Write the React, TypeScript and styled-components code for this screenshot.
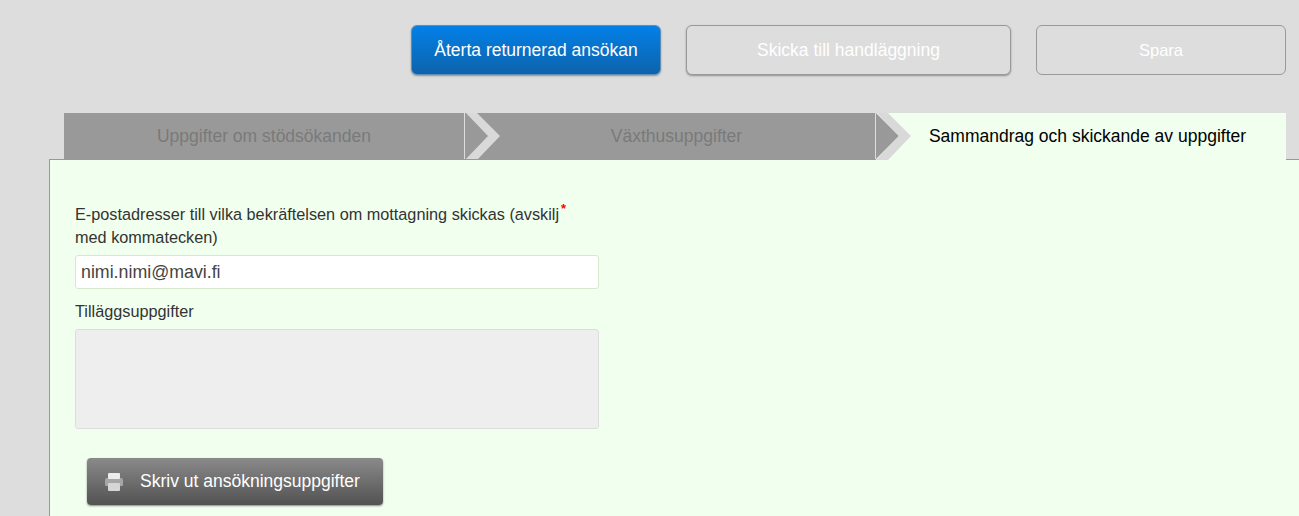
import React from 'react'
import styled, { createGlobalStyle } from 'styled-components'

const GlobalStyle = createGlobalStyle`
  html, body {
    margin: 0;
    padding: 0;
    height: 516px;
    overflow: hidden;
    background: #dddddd;
    font-family: "Liberation Sans", Arial, sans-serif;
  }
  * { box-sizing: border-box; }
`

const Page = styled.div`
  width: 1299px;
  height: 516px;
  overflow: hidden;
`

const Toolbar = styled.div`
  display: flex;
  justify-content: flex-end;
  gap: 25px;
  padding: 25px 13px 0 0;
`

const ActionButton = styled.button<{ $width: number; $flat?: boolean }>`
  width: ${p => p.$width}px;
  height: 50px;
  border: 1px solid #999999;
  border-radius: 6px;
  background: #dddddd;
  color: #ffffff;
  font: ${p => (p.$flat ? 16.5 : 17.5)}px "Liberation Sans", Arial, sans-serif;
  box-shadow: ${p => (p.$flat ? 'none' : '0 1px 2px rgba(0, 0, 0, 0.35)')};
`

const PrimaryButton = styled(ActionButton)`
  border-color: #5f8db5;
  background: linear-gradient(to bottom, #0380e8, #0d63ab);
`

const Steps = styled.div`
  display: flex;
  margin: 38px 13px 0 64px;
  height: 46px;
`

const Step = styled.div<{ $active?: boolean; $arrow?: boolean; $width: number }>`
  position: relative;
  display: flex;
  align-items: center;
  justify-content: center;
  width: ${p => p.$width}px;
  height: ${p => (p.$active ? 47 : 46)}px;
  z-index: ${p => (p.$active ? 1 : 0)};
  background: ${p => (p.$active ? '#f1ffee' : '#999999')};
  color: ${p => (p.$active ? '#000000' : '#7a7a7a')};
  border-right: ${p => (p.$active ? 'none' : '1px solid #dddddd')};
  padding-left: ${p => (p.$arrow ? 13 : 0)}px;
  font-size: 17.5px;
`

const Chevron = styled.svg`
  position: absolute;
  top: 0;
  left: 0;
  width: 36px;
  height: 47px;
`

const Panel = styled.div`
  position: relative;
  margin-left: 49px;
  height: 400px;
  background: #f1ffee;
  border-top: 1px solid #999999;
  border-left: 1px solid #999999;
  padding: 43px 0 0 25px;
`

const Form = styled.div`
  width: 524px;
`

const FieldLabel = styled.label`
  display: block;
  max-width: 500px;
  color: #333333;
  font-size: 16.25px;
  line-height: 23px;
`

const Required = styled.span`
  color: #ff0000;
  font-size: 13px;
  font-weight: bold;
  line-height: 0;
  vertical-align: 7px;
  margin-left: 2px;
`

const TextInput = styled.input`
  display: block;
  width: 100%;
  height: 34px;
  margin-top: 6px;
  padding: 0 5px;
  border: 1px solid #d8e8cf;
  border-radius: 3px;
  background: #ffffff;
  color: #444444;
  font: 17.8px "Liberation Sans", Arial, sans-serif;
`

const SecondLabel = styled(FieldLabel)`
  margin-top: 11px;
`

const TextArea = styled.textarea`
  display: block;
  width: 100%;
  height: 100px;
  margin-top: 6px;
  border: 1px solid #dddddd;
  border-radius: 3px;
  background: #eeeeee;
  resize: none;
`

const PrintButton = styled.button`
  display: flex;
  align-items: center;
  gap: 17px;
  width: 296px;
  height: 47px;
  margin: 29px 0 0 12px;
  padding: 0 0 0 18px;
  border: none;
  border-radius: 4px;
  background: linear-gradient(to bottom, #8a8a8a, #525252);
  box-shadow: 0 1px 2px rgba(0, 0, 0, 0.45);
  color: #ffffff;
  font: 17.5px "Liberation Sans", Arial, sans-serif;
`

const PrinterIcon = () => (
  <svg width="18" height="20" viewBox="0 0 18 20">
    <path d="M2 6h14a2 2 0 0 1 2 2v5a1 1 0 0 1-1 1H1a1 1 0 0 1-1-1V8a2 2 0 0 1 2-2z" fill="#a6a6a6" />
    <rect x="3" y="1" width="12" height="6" rx="1" fill="#ececec" />
    <rect x="3" y="11" width="12" height="8" rx="1" fill="#d6d6d6" />
  </svg>
)

const StepArrow = () => (
  <Chevron viewBox="0 0 36 47">
    <polygon points="0,0 23,23 0,46" fill="#999999" />
    <polygon points="1,0 12,0 35,23 12,47 0,47 23,23" fill="#d9d9d9" />
  </Chevron>
)

export default function App() {
  return (
    <Page>
      <GlobalStyle />
      <Toolbar>
        <PrimaryButton $width={250}>Återta returnerad ansökan</PrimaryButton>
        <ActionButton $width={325}>Skicka till handläggning</ActionButton>
        <ActionButton $width={250} $flat>Spara</ActionButton>
      </Toolbar>
      <Steps>
        <Step $width={401}>Uppgifter om stödsökanden</Step>
        <Step $width={411} $arrow>
          <StepArrow />
          Växthusuppgifter
        </Step>
        <Step $width={410} $arrow $active>
          <StepArrow />
          Sammandrag och skickande av uppgifter
        </Step>
      </Steps>
      <Panel>
        <Form>
          <FieldLabel>
            E-postadresser till vilka bekräftelsen om mottagning skickas (avskilj<Required>*</Required> med kommatecken)
          </FieldLabel>
          <TextInput defaultValue="nimi.nimi@mavi.fi" />
          <SecondLabel>Tilläggsuppgifter</SecondLabel>
          <TextArea disabled />
          <PrintButton>
            <PrinterIcon />
            Skriv ut ansökningsuppgifter
          </PrintButton>
        </Form>
      </Panel>
    </Page>
  )
}
